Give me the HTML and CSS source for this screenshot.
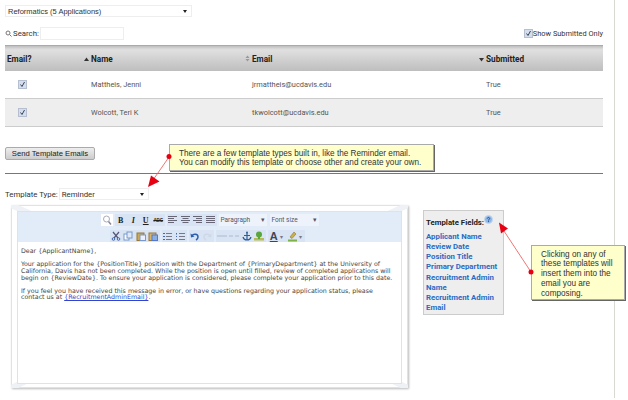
FILE: index.html
```html
<!DOCTYPE html>
<html lang="en">
<head>
  <meta charset="UTF-8">
  <title>Template Emails</title>
  <link rel="stylesheet" href="styles.css">
</head>
<body>
  <div class="page">
    <div class="select app-select"><span>Reformatics (5 Applications)</span><i class="caret"></i></div>

    <div class="filter-row">
      <div class="search">
        <svg class="search-icon" width="7" height="7" viewBox="0 0 7 7"><circle cx="3" cy="3" r="2" fill="none" stroke="#777"/><path d="M4.5 4.5L6.5 6.5" stroke="#777"/></svg>
        <label>Search:</label>
        <input type="text" class="search-box">
      </div>
      <div class="submitted-only"><span class="check"><svg width="9" height="9" viewBox="0 0 9 9"><path d="M2.5 4.5L4 6.5L6.5 2" fill="none" stroke="#345"/></svg></span>Show Submitted Only</div>
    </div>

    <table class="apps">
      <thead>
        <tr>
          <th class="col-check">Email?</th>
          <th class="col-name"><svg class="sort" width="5" height="5" viewBox="0 0 5 5"><path d="M2.500 .5L5 4H0Z" fill="#333"/></svg>Name</th>
          <th class="col-email"><svg class="sort" width="5" height="7" viewBox="0 0 5 7"><path d="M2.500 .5L4.500 3H.5ZM2.500 6.500L4.500 4H.5Z" fill="#999"/></svg>Email</th>
          <th class="col-sub"><svg class="sort" width="5" height="5" viewBox="0 0 5 5"><path d="M2.500 4.500L5 1H0Z" fill="#333"/></svg>Submitted</th>
        </tr>
      </thead>
      <tbody>
        <tr>
          <td class="cell-check"><span class="check"><svg width="9" height="9" viewBox="0 0 9 9"><path d="M2.5 4.5L4 6.5L6.5 2" fill="none" stroke="#345"/></svg></span></td>
          <td>Mattheis, Jenni</td>
          <td>jrmattheis@ucdavis.edu</td>
          <td>True</td>
        </tr>
        <tr class="alt">
          <td class="cell-check"><span class="check"><svg width="9" height="9" viewBox="0 0 9 9"><path d="M2.5 4.5L4 6.5L6.5 2" fill="none" stroke="#345"/></svg></span></td>
          <td>Wolcott, Teri K</td>
          <td>tkwolcott@ucdavis.edu</td>
          <td>True</td>
        </tr>
      </tbody>
    </table>

    <button class="send-btn">Send Template Emails</button>
    <hr class="divider">

    <div class="type-row">
      <label>Template Type:</label>
      <div class="select type-select"><span>Reminder</span><i class="caret"></i></div>
    </div>

    <div class="compose">
      <div class="editor-card">
        <svg class="envelope" width="397" height="183" viewBox="0 0 397 183"><path d="M0 0L198 90L397 0M0 183L198 90L397 183" fill="none" stroke="#eef1f5" stroke-width="6"/></svg>
        <div class="editor">
          <div class="toolbar">
            <div class="tb-row">
              <span class="tb-solo"><svg width="12" height="12" viewBox="0 0 12 12"><circle cx="5.5" cy="5" r="3" fill="#fff" stroke="#aab"/><path d="M7.5 7.5L10 10.500" stroke="#889" stroke-width="1.500"/></svg></span>
              <div class="tb-group">
                <b class="tb tb-b">B</b><b class="tb tb-i">I</b><b class="tb tb-u">U</b><b class="tb tb-abc">ABC</b>
              </div>
              <div class="tb-group">
                <span class="tb"><svg width="9" height="8" viewBox="0 0 9 8"><path d="M0 .5H9M0 2.500H6M0 4.500H9M0 6.500H6" stroke="#667"/></svg></span>
                <span class="tb"><svg width="9" height="8" viewBox="0 0 9 8"><path d="M0 .5H9M1.500 2.500H7.500M0 4.500H9M1.500 6.500H7.500" stroke="#667"/></svg></span>
                <span class="tb"><svg width="9" height="8" viewBox="0 0 9 8"><path d="M0 .5H9M3 2.500H9M0 4.500H9M3 6.500H9" stroke="#667"/></svg></span>
                <span class="tb"><svg width="9" height="8" viewBox="0 0 9 8"><path d="M0 .5H9M0 2.500H9M0 4.500H9M0 6.500H9" stroke="#667"/></svg></span>
              </div>
              <div class="tb-drop para">Paragraph<i>&#9662;</i></div>
              <div class="tb-drop size">Font size<i>&#9662;</i></div>
            </div>
            <div class="tb-row row-two">
              <div class="tb-group">
                <span class="tb"><svg width="10" height="10" viewBox="0 0 10 10"><path d="M2 1L7 7M8 1L3 7" stroke="#557" stroke-width="1.200"/><circle cx="2.500" cy="8" r="1.300" fill="none" stroke="#46a"/><circle cx="7.500" cy="8" r="1.300" fill="none" stroke="#46a"/></svg></span>
                <span class="tb"><svg width="10" height="10" viewBox="0 0 10 10"><rect x="1" y="3" width="5" height="6" fill="#fff" stroke="#79c"/><rect x="4" y="1" width="5" height="6" fill="#dfe9f7" stroke="#79c"/></svg></span>
                <span class="tb"><svg width="10" height="10" viewBox="0 0 10 10"><rect x="1" y="2" width="7" height="7.500" fill="#c9a95c" stroke="#96793a"/><rect x="4" y="4" width="5.500" height="5.500" fill="#eef" stroke="#79c"/></svg></span>
                <span class="tb"><svg width="10" height="10" viewBox="0 0 10 10"><rect x="1" y="2" width="7" height="7.500" fill="#d4b46a" stroke="#96793a"/><rect x="4" y="4" width="5.500" height="5.500" fill="#8ab0e0" stroke="#57c"/></svg></span>
              </div>
              <div class="tb-group">
                <span class="tb"><svg width="9" height="9" viewBox="0 0 9 9"><path d="M3 1.500H9M3 4.500H9M3 7.500H9" stroke="#778"/><path d="M0 1.500H2M0 4.500H2M0 7.500H2" stroke="#46a"/></svg></span>
                <span class="tb"><svg width="9" height="9" viewBox="0 0 9 9"><path d="M3 1.500H9M3 4.500H9M3 7.500H9" stroke="#778"/><path d="M.5 1V2.500M.5 4V5M.5 7V8" stroke="#46a"/></svg></span>
              </div>
              <div class="tb-group">
                <span class="tb"><svg width="10" height="9" viewBox="0 0 10 9"><path d="M2 4C3 1.500 8 1.500 8 5C8 6.500 7 7.500 6 8" fill="none" stroke="#2a5fb0" stroke-width="1.500"/><path d="M0.500 1.500L1 5.500L4.500 4.500Z" fill="#2a5fb0"/></svg></span>
                <span class="tb"><svg width="10" height="9" viewBox="0 0 10 9"><path d="M8 4C7 1.500 2 1.500 2 5C2 6.500 3 7.500 4 8" fill="none" stroke="#cfd8e6" stroke-width="1.500"/><path d="M9.500 1.500L9 5.500L5.500 4.500Z" fill="#cfd8e6"/></svg></span>
              </div>
              <div class="tb-group">
                <span class="tb"><svg width="10" height="6" viewBox="0 0 10 6"><path d="M0 3H10" stroke="#c3cfe0" stroke-width="2"/></svg></span>
                <span class="tb"><svg width="10" height="6" viewBox="0 0 10 6"><path d="M0 3H4M6 3H10" stroke="#c3cfe0" stroke-width="2"/></svg></span>
                <span class="tb"><svg width="10" height="10" viewBox="0 0 10 10"><path d="M5 2V9M2 4.500H8M1 6C1.500 8 3.500 9 5 9C6.500 9 8.500 8 9 6" fill="none" stroke="#2d5f9a" stroke-width="1.200"/><circle cx="5" cy="1.500" r="1" fill="#2d5f9a"/></svg></span>
                <span class="tb"><svg width="10" height="10" viewBox="0 0 10 10"><rect x="0" y="7" width="10" height="2.500" fill="#b8ba5a"/><circle cx="5" cy="3.500" r="3" fill="#5aa53c"/><path d="M5 5V8" stroke="#5aa53c" stroke-width="2"/></svg></span>
              </div>
              <div class="tb-group">
                <b class="tb tb-a">A</b><i class="tb-mini">&#9662;</i>
                <span class="tb"><svg width="11" height="11" viewBox="0 0 11 11"><path d="M3 6L7 1L9 3L5 7.500Z" fill="#c9b04a" stroke="#8d7a2c" stroke-width=".6"/><rect x="1" y="8.500" width="9" height="2" fill="#7bb349"/></svg></span><i class="tb-mini">&#9662;</i>
              </div>
            </div>
          </div>
          <div class="editor-body">
            <p>Dear {ApplicantName},</p>
            <p>Your application for the {PositionTitle} position with the Department of {PrimaryDepartment} at the University of<br>California, Davis has not been completed. While the position is open until filled, review of completed applications will<br>begin on {ReviewDate}. To ensure your application is considered, please complete your application prior to this date.</p>
            <p>If you feel you have received this message in error, or have questions regarding your application status, please<br>contact us at <a href="#">{RecruitmentAdminEmail}</a>.</p>
          </div>
        </div>
      </div>

      <div class="fields">
        <div class="fields-title">Template Fields:<svg class="help" width="9" height="9" viewBox="0 0 9 9"><circle cx="4.500" cy="4.500" r="4" fill="#8fb6e6" stroke="#c5d8f0"/><path d="M3.200 3.500C3.500 2 6 2.300 5.600 3.800C5.400 4.500 4.500 4.500 4.500 5.500M4.500 6.200V7" fill="none" stroke="#1c4f94"/></svg></div>
        <a href="#">Applicant Name</a>
        <a href="#">Review Date</a>
        <a href="#">Position Title</a>
        <a href="#">Primary Department</a>
        <a href="#">Recruitment Admin Name</a>
        <a href="#">Recruitment Admin Email</a>
      </div>
    </div>

    <div class="note note-types">There are a few template types built in, like the Reminder email.<br>You can modify this template or choose other and create your own.</div>
    <div class="note note-fields">Clicking on any of these templates will insert them into the email you are composing.</div>

    <svg class="arrows" width="628" height="400" viewBox="0 0 628 400">
      <path d="M169 157L153 180" stroke="#f05050" stroke-width=".8"/>
      <circle cx="169" cy="156.500" r="2.500" fill="#e60012"/>
      <path d="M148 187L151 175.500L159.500 181.500Z" fill="#e60012"/>
      <path d="M531 272L504 231" stroke="#f05050" stroke-width=".8"/>
      <circle cx="531" cy="272" r="2.500" fill="#e60012"/>
      <path d="M499 222.500L508 228.500L501 233.500Z" fill="#e60012"/>
    </svg>
  </div>
</body>
</html>
```
FILE: styles.css
```css
html, body {
  margin: 0;
  background: #fff;
}
body {
  font-family: Roboto, sans-serif;
  font-size: 7.800px;
  color: #444;
  overflow: hidden;
}
.page {
  position: relative;
  box-sizing: border-box;
  width: 615px;
  height: 398px;
  padding: 5px 11px 0 5px;
  border-right: 1px solid #d9d9d3;
}
.select {
  display: flex;
  justify-content: space-between;
  align-items: center;
  box-sizing: border-box;
  height: 12px;
  padding: 0 4px 0 2px;
  background: #fff;
  border: 1px solid #eee;
  color: #333;
}
.caret {
  width: 0;
  height: 0;
  border: 2px solid transparent;
  border-top: 3px solid #222;
  border-bottom: 0;
}
.app-select {
  width: 187px;
  font-family: "Liberation Sans", sans-serif;
  font-size: 7.500px;
}
.filter-row {
  display: flex;
  justify-content: space-between;
  align-items: center;
  height: 14px;
  margin: 9px 0 5px;
}
.search {
  display: flex;
  align-items: center;
  gap: 1px;
  color: #333;
}
.search-box {
  box-sizing: border-box;
  width: 84px;
  height: 13px;
  margin: 0;
  padding: 0;
  border: 1px solid #eee;
}
.submitted-only {
  display: flex;
  align-items: center;
  gap: 0;
  font-size: 7.400px;
  color: #333;
}
.check {
  display: inline-block;
  box-sizing: border-box;
  width: 9px;
  height: 9px;
  background: #d5deee;
  border: 1px solid #b6bfd0;
  line-height: 0;
}
.check svg {
  margin: -1px;
}
.apps {
  width: 598px;
  table-layout: fixed;
  border-collapse: collapse;
}
.apps th {
  height: 25px;
  padding: 0;
  text-align: left;
  font-size: 8.200px;
  color: #222;
  background: linear-gradient(#c2c2c2, #e0e0e0 12%, #bdbdbd);
  border-top: 1px solid #aaa;
}
.col-check {
  width: 77px;
  padding-left: 2px !important;
}
.col-name {
  width: 161px;
}
.col-email {
  width: 234px;
}
.sort {
  margin-right: 2px;
}
.apps td {
  height: 27px;
  padding: 0 0 0 7px;
  font-size: 7.400px;
  color: #555;
  border-bottom: 1px solid #ccc;
}
.apps .alt td {
  background: #eee;
}
.apps .cell-check {
  padding-left: 13px;
  line-height: 0;
}
.send-btn {
  display: block;
  box-sizing: border-box;
  width: 90px;
  height: 13px;
  margin: 20px 0 0;
  padding: 0;
  font: 7.700px "Liberation Sans", sans-serif;
  color: #222;
  background: linear-gradient(#eee, #ccc);
  border: 1px solid #aaa;
  border-radius: 2px;
}
.divider {
  height: 1px;
  margin: 13px 0 0;
  border: 0;
  background: #777;
}
.type-row {
  display: flex;
  align-items: center;
  gap: 1px;
  margin-top: 14px;
  color: #333;
}
.type-select {
  width: 90px;
}
.compose {
  display: flex;
  align-items: flex-start;
  gap: 15px;
  margin: 5px 0 0 6px;
}
.editor-card {
  position: relative;
  box-sizing: border-box;
  width: 397px;
  height: 183px;
  padding: 5px 5px 3px 5px;
  background: #fff;
  border: 1px solid #dfe2e6;
  box-shadow: 1px 1px 2px #bbb;
}
.envelope {
  position: absolute;
  top: -1px;
  left: -1px;
}
.editor {
  position: relative;
  box-sizing: border-box;
  height: 100%;
  background: #fff;
  border: 1px solid #dbe3ef;
}
.toolbar {
  display: flex;
  flex-direction: column;
  align-items: center;
  gap: 4px;
  box-sizing: border-box;
  height: 30px;
  padding-top: 2px;
  background: #e2ebf8;
}
.tb-row {
  display: flex;
  align-items: center;
  gap: 2px;
  height: 12px;
}
.row-two {
  margin-right: 5px;
}
.tb-solo {
  display: flex;
  width: 12px;
  height: 12px;
  background: #fff;
}
.tb-group {
  display: flex;
  align-items: center;
  height: 12px;
  background: #d8e3f3;
}
.tb {
  display: flex;
  justify-content: center;
  align-items: center;
  width: 12.500px;
  height: 12px;
  font-family: "Liberation Serif", serif;
  font-size: 8px;
  color: #222;
}
.tb-i {
  font-style: italic;
}
.tb-u {
  text-decoration: underline;
}
.tb-abc {
  font: bold 4.500px "Liberation Sans", sans-serif;
  text-decoration: line-through;
}
.tb-a {
  font: bold 11px "Liberation Sans", sans-serif;
  color: #445;
  text-decoration: underline;
}
.tb-mini {
  width: 6px;
  font-size: 6px;
  font-style: normal;
  color: #778;
}
.tb-drop {
  display: flex;
  justify-content: space-between;
  align-items: center;
  box-sizing: border-box;
  height: 12px;
  padding: 0 2px;
  font-size: 6.500px;
  color: #556;
  background: #eef3fb;
}
.tb-drop i {
  font-style: normal;
}
.para {
  width: 48px;
}
.size {
  width: 49px;
  margin-left: 1px;
}
.editor-body {
  padding: 6px 3px 0;
  font-family: "DejaVu Sans", sans-serif;
  font-size: 6.300px;
  line-height: 6.800px;
  color: #444;
}
.editor-body p {
  margin: 0 0 6.200px;
  white-space: nowrap;
}
.editor-body a {
  color: #3344cc;
}
.fields {
  box-sizing: border-box;
  width: 81px;
  margin-top: 5px;
  padding: 4px 2px 1px 2px;
  background: #eee;
  border: 1px solid #ccc;
  font-size: 7.800px;
  line-height: 10.200px;
}
.fields-title {
  margin-bottom: 3.500px;
  font-weight: bold;
  color: #222;
  white-space: nowrap;
}
.help {
  vertical-align: 1px;
}
.fields a {
  display: block;
  font-weight: bold;
  color: #2a6bc4;
  text-decoration: none;
}
.note {
  position: absolute;
  box-sizing: border-box;
  font-family: "Liberation Sans", sans-serif;
  font-size: 8.200px;
  line-height: 9.800px;
  color: #333;
  background: #ffffcc;
  border: 1px solid #aaa;
  box-shadow: 1px 1px 0 #666;
}
.note-types {
  top: 144px;
  left: 169px;
  width: 265px;
  height: 27px;
  padding: 3.500px 9px;
}
.note-fields {
  top: 245px;
  left: 531px;
  width: 94px;
  height: 55px;
  padding: 3.500px 9px;
}
.arrows {
  position: absolute;
  top: 0;
  left: 0;
  pointer-events: none;
}
```
